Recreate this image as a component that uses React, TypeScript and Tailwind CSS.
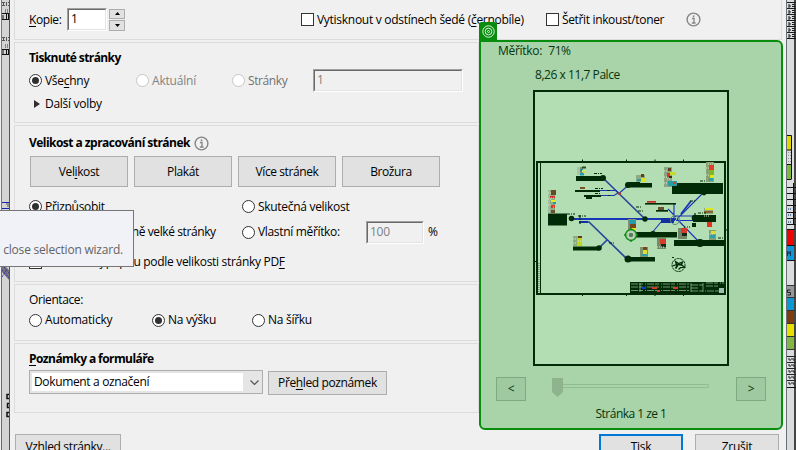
import React from "react";
import { clsx } from "clsx";

type TextProps = { children: React.ReactNode; className?: string };

function T({ children, className = "tracking-[-0.28px]" }: TextProps) {
  return <span className={clsx("block shrink-0 whitespace-pre leading-4", className)}>{children}</span>;
}

function U({ children }: { children: React.ReactNode }) {
  return <span className="underline decoration-1 underline-offset-2">{children}</span>;
}

function Radio({ on, disabled }: { on?: boolean; disabled?: boolean }) {
  return (
    <span className={clsx("mr-[3px] flex size-[13px] shrink-0 items-center justify-center rounded-full border bg-white", disabled ? "border-[#c6c6c6]" : "border-[#333]")}>
      {on && <span className="size-[7px] rounded-full bg-[#303030]" />}
    </span>
  );
}

function Check() {
  return <span className="mr-[3px] size-[13px] shrink-0 border border-[#333] bg-white" />;
}

function Info() {
  return (
    <svg className="size-[15px] shrink-0" viewBox="0 0 15 15">
      <circle cx="7.5" cy="7.5" r="6.4" fill="none" stroke="#858585" strokeWidth="1.4" />
      <path d="M6 6.5h2v4.5M5.8 11h3.8" fill="none" stroke="#858585" strokeWidth="1.3" />
      <rect x="6.8" y="3.4" width="1.5" height="1.7" fill="#858585" />
    </svg>
  );
}

function Field({ children, className }: TextProps) {
  return (
    <span className={clsx("flex shrink-0 border border-t-[#a0a0a0] border-l-[#a0a0a0] border-r-white border-b-white", className)}>
      <span className="flex w-full border border-t-[#696969] border-l-[#696969] border-r-[#e3e3e3] border-b-[#e3e3e3] pl-[2px] pt-[1px]">
        {children}
      </span>
    </span>
  );
}

function Button({ children, className }: TextProps) {
  return (
    <span className={clsx("flex shrink-0 items-center justify-center border border-[#adadad] bg-[#e1e1e1]", className)}>{children}</span>
  );
}

function Group({ children, className }: TextProps) {
  return <section className={clsx("ml-1 flex w-[465px] shrink-0 flex-col border border-[#dcdcdc] pl-[14px]", className)}>{children}</section>;
}

const DARK = "#012b06";

/* x, y, width, height, colour */
const blocks: [number, number, number, number, string][] = [
  [576, 176, 28, 5, DARK], [575, 190, 25, 2, DARK], [584, 195, 17, 2, DARK], [586, 197, 6, 2, DARK],
  [548, 213.5, 19, 12, DARK], [573, 246.5, 26, 4, DARK], [627, 183, 25, 4.5, DARK],
  [672, 183, 51, 11, DARK], [645, 203, 31, 1.6, DARK], [656, 210, 12, 1.7, DARK],
  [693, 215, 23, 7, DARK], [692, 223, 4, 4, DARK], [636, 232, 41, 5.5, DARK],
  [674, 240, 51, 6, DARK], [628, 257, 27, 4.5, DARK], [629, 182, 11, 5, DARK],
  [579, 221, 9, 2, "#1430a6"], [661, 218, 13, 5, "#1230a0"],
  [577, 167, 3, 8, "#a9c3a3"], [580, 167, 3, 8, "#7c8d72"], [582, 166.5, 4, 2, "#244f15"], [580, 169, 3, 2.3, "#248c9a"], [582, 170, 4, 2.5, "#dfe41a"], [580, 173, 4, 2.5, "#249eb4"],
  [548, 190, 3, 23, "#9dbf9b"], [550, 190, 5, 23, "#8fac88"], [551, 190, 5, 5, "#664b25"], [550, 196, 5, 2, "#d7302a"],
  [551, 200, 4, 2, "#e5ed24"], [553, 202, 3, 2, "#239bac"], [551, 205, 4, 3, "#df3426"], [551, 210, 4, 3, "#714f2b"],
  [580, 187, 5, 2, "#795322"], [573, 236, 9, 10, "#8fab86"], [577, 238, 5, 8, "#bad817"], [578, 236, 4, 2, "#5f3b16"],
  [636, 175, 9, 7, "#8fab86"], [641, 174, 3, 3, "#6d3b17"], [641, 178, 4, 4, "#d9e918"], [637, 179, 4, 2, "#2b9ba4"],
  [664, 167, 8, 20, "#8aa680"], [668, 168, 3, 3, "#63421b"], [667, 173, 3, 4, "#df3528"], [670, 172, 6, 3, "#c5dd21"],
  [669, 176, 3, 2, "#243b1a"], [668, 181, 9, 5, "#2b9ba4"], [673, 182, 3, 2, "#d64430"],
  [706, 162, 8, 20, "#88a278"], [709, 165, 5, 5, "#e63b28"], [709, 170, 5, 5, "#7eb924"], [710, 175, 4, 3, "#dfe719"], [709, 178, 4, 3, "#2ba2b2"],
  [647, 201, 9, 1.7, "#c92a21"], [658, 207, 6, 3, "#67512b"],
  [704, 208, 9, 6, "#8eaa7f"], [705, 208, 8, 2, "#dfe628"], [704, 211, 9, 2, "#89652c"],
  [705, 222, 8, 5, "#bdd6ae"], [707, 222, 5, 5, "#df3425"],
  [628, 219, 8, 14, "#7b8e72"], [630, 220, 6, 4, "#249caf"], [630, 224, 6, 4, "#78461c"], [631, 228, 5, 3, "#e3e526"],
  [678, 228, 9, 11, "#718766"], [681, 228, 6, 5, "#da3a2e"], [682, 233, 5, 3, "#142915"],
  [657, 238, 9, 11, "#738b69"], [660, 239, 6, 5, "#d83a2c"], [661, 244, 5, 3, "#142915"],
  [709, 230, 7, 10, "#80a073"], [711, 231, 5, 3, "#dce127"], [710, 235, 5, 3, "#2c9fab"],
  [640, 247, 8, 10, "#7c956c"], [643, 247, 4, 3, "#76461d"], [643, 250, 4, 4, "#dce229"], [642, 254, 5, 2, "#2c9fab"],
];

function Preview() {
  return (
    <svg className="block h-[272px] w-[192px]" viewBox="535 92 192 272">
      <path d="M536 162H726M537 161V295M725 161V295M536 294H726" stroke={DARK} strokeWidth="2" fill="none" />
      <path d="M540.500 163V293" stroke={DARK} strokeWidth="1" />
      <path d="M538.800 263V292" stroke="#71916f" strokeWidth="1.500" strokeDasharray="1 1" />
      <path d="M582.500 159.500v3M626.500 159.500v3M655 159.500v3M683.500 159.500v3M582.500 293v3M626.500 293v3M655 293v3M683.500 293v3M534 261.500h3M725 230h3" stroke={DARK} />
      <g stroke="#1836b5" fill="none">
        <path d="M571 218.900H676" strokeWidth="2" />
        <path d="M603 178L644 218M579 222H589L628 260M607 240l-9 9" strokeWidth="1.700" stroke="#28489b" />
        <path d="M600 190.500h16l3 3 9-8M601 195.500h13l5-3M674 203v16M668 209l8 8M677 219l26-26M661 222l-10 12M676 216h17M676 220.500h17M677 219l23 24" strokeWidth="1.100" />
        <path d="M691 201l-10 13M663 220h12" strokeWidth="1.800" />
      </g>
      {blocks.map(([x, y, w, h, c], i) => (
        <rect key={i} x={x} y={y} width={w} height={h} fill={c} />
      ))}
      <g fill={DARK}>
        <circle cx="603" cy="178" r="3" /><circle cx="571.500" cy="218.500" r="2.800" />
        <circle cx="628" cy="185" r="3" /><circle cx="599" cy="248" r="2.800" />
        <circle cx="628" cy="259" r="3.500" /><circle cx="645" cy="219" r="2.700" />
        <circle cx="653" cy="234" r="3" /><circle cx="700" cy="243" r="4" />
        <circle cx="695" cy="218" r="3.300" /><circle cx="704" cy="193" r="2.400" />
      </g>
      <circle cx="619.500" cy="193.500" r="1.600" fill="#a34140" />
      <path d="M580 215v9M578 216h8M594 173.500h8M607 190.500h3M608 195.500h2M595 188.500h8M595 193.500h6M597 210.500h0M609 243h6M636 207h5M695 213v14M698 213h8M700 181h5M718 238h5M567 214h8M683 227h7M690 201h5M638 211h5" stroke={DARK} strokeWidth="1.200" strokeDasharray="3 1 1 1" />
      <circle cx="675" cy="220" r="4.500" fill="none" stroke="#5d8873" />
      <path d="M582 171h3M551 198h4M553 207h3M578 241h4M641 173h3M667 179h4M708 164h5M704 216h5M679 227h8M657 247h8M708 234h6M640 246h7M573 239h4M573 243h4M548 193h3M548 199h3M548 205h3M664 171h3M664 177h3M664 183h3M706 168h3M706 175h3" stroke="#d6e7c5" strokeDasharray="1 1" />
      <g fill="none" stroke={DARK}>
        <circle cx="678.500" cy="265" r="6.500" strokeWidth=".9" strokeDasharray="3 .5" />
        <path d="M672.500 266l4-1.500-1-3 3 2 4-1.500-1 3 3 2-4 .5-2 2" strokeWidth="1.300" />
        <path d="M676 264.500h6M677.500 265.500l-2 3" strokeWidth="1.800" />
        <path d="M672 257.500h2" />
      </g>
      <rect x="630" y="282" width="95" height="11" fill={DARK} />
      <g fill="none" stroke="#b3ddb0" strokeWidth=".6">
        <path d="M631 284h58M631 287h58M631 290.500h58M691 285h12M691 288h8M691 291h30M706 283h18M706 286h14" strokeDasharray="7 1 4 2 1 1" />
        <path d="M640 283v9M691 283v9M703 283v9" />
      </g>
      <path d="M642 288h4" stroke="#1437c9" strokeWidth="2" />
      <path d="M652 288h5M673 288h5M657 291h3" stroke="#d63d2c" strokeWidth="2" />
      <rect x="719" y="288" width="5" height="5" fill="#9ebfab" />
      <circle cx="631" cy="235" r="5.500" fill="#9cbd97" stroke="#078b12" strokeWidth="1.300" />
      <path d="M631 228v2M631 240v2M624 235h2M636 235h2" stroke="#078b12" strokeWidth="1.300" />
      <circle cx="631" cy="235" r="3" fill="#55805a" stroke="#c4d9bd" strokeWidth="1.300" />
    </svg>
  );
}

function LeftEdge() {
  return (
    <svg className="h-[450px] w-[10px] shrink-0" viewBox="0 0 10 450">
      <path d="M0 0h10v450H0z" fill="#d4d4d4" />
      <path d="M0 0h1v450H0z" fill="#f0f0f0" />
      <path d="M1.5 0v268" stroke="#777" />
      <path d="M1.5 268v182" stroke="#2b78c5" />
      <g stroke="#555" strokeWidth="1" fill="none">
        <path d="M2 2.5h7M2 5.5h7M2 37.5h7M2 40.5h7" strokeDasharray="1 1" />
        <path d="M3.5 2v4M6.5 2v4M3.5 37v4M6.5 37v4" />
      </g>
      <path d="M5.5 9v4M7.5 9v4M5.5 44v4M7.5 44v4" stroke="#a77474" />
      <path d="M2 13.5h7M2 19.5h7M3 15v4M6.5 14v5M8.5 14v5M2 49.5h7M2 54.5h7M3 50v4M6.5 50v5M8.5 50v5" stroke="#111" />
      <path d="M2 202.5h7M2 208.5h7" stroke="#1724ac" />
      <path d="M6 204h3M7 206h2" stroke="#555" />
      <path d="M2 267h4l3 3v10l-7-8z" fill="#777" />
      <path d="M2 270l7 8M2 277l5-8M4 267l5 6" stroke="#3932ad" strokeDasharray="2 1" />
      <path d="M9 394.5H7v4h2M9 403.5H7.5v4H9M9 412.500H7v4h2" fill="none" stroke="#111" strokeWidth="1.500" />
      <path d="M9.500 0v450" stroke="#555" />
    </svg>
  );
}

function RightEdge() {
  return (
    <svg className="h-[450px] w-[10px] shrink-0" viewBox="786 0 10 450">
      <path d="M786 0h10v450h-10z" fill="#dcdcdc" />
      <path d="M786.500 0v450" stroke="#68707a" />
      <path d="M795 0v450" stroke="#464646" strokeWidth="2" />
      {[2, 8, 14, 20, 26, 32].map((y) => (
        <path key={y} d={`M787 ${y + 0.5}h9M788 ${y + 3}h2v2h-2M792 ${y + 2.5}h3M792 ${y + 4.5}h3v-1`} fill="none" stroke="#1c1c1c" />
      ))}
      <path d="M787 38.500h9" stroke="#111" />
      <path d="M787 135h4v15h-4z" fill="#e0d800" />
      <path d="M787 165h4v14h-4z" fill="#83b541" />
      <path d="M787 135.500h4.500v44M787 150h4M787 164.500h4M787 179.500h4" fill="none" stroke="#111" />
      <path d="M788.500 152v11M790.500 152v11" stroke="#999" strokeDasharray="1 2" />
      <path d="M787 187.500h9M787 193.500h9M787 199.500h9M787 205.500h9M787 212.500h9M787 218.500h9M787 224.500h9M793.500 183v42" stroke="#111" />
      <path d="M788 209h4M788 215h4M788 222h4" stroke="#6581a0" strokeWidth="2" strokeDasharray="1 1" />
      <path d="M787 230h7v15h-7z" fill="#ed0505" />
      <path d="M787 246h7v15h-7z" fill="#0b98d8" />
      <path d="M787 229.500h8M787 245.500h8M787 260.500h8" stroke="#111" />
      <path d="M787.500 256v-5l1.500 3 1.500-3v5" fill="none" stroke="#183857" />
      <path d="M787 286h7v11h-7z" fill="#999" />
      <path d="M787 298h7v12h-7z" fill="#0c98d5" />
      <path d="M787 311h7v12h-7z" fill="#7f3c0e" />
      <path d="M787 324h7v12h-7z" fill="#e6df00" />
      <path d="M787 337h7v12h-7z" fill="#83b642" />
      <path d="M787 285.500h8M787 297.500h8M787 310.500h8M787 323.500h8M787 336.500h8M787 349.500h8" stroke="#333" />
      <path d="M790.500 290h-3v2.500h3v2.500h-3" fill="none" stroke="#222" />
      {[357, 363, 369, 375, 381].map((y) => (
        <path key={y} d={`M787 ${y - 0.5}h9M788 ${y + 2}h2v2M791 ${y + 2}h3v2`} fill="none" stroke="#222" />
      ))}
      <path d="M787 387.500h9" stroke="#111" />
    </svg>
  );
}

export default function App() {
  return (
    <main className="relative flex h-[450px] w-[796px] overflow-hidden bg-[#f0f0f0] font-['Open_Sans','Noto_Sans',sans-serif] text-[12px] text-black">
      <LeftEdge />
      <div className="flex w-[776px] shrink-0 flex-col">
        <section className="ml-1 flex h-10 w-[768px] shrink-0 items-center border-x border-b border-[#dcdcdc] pl-[14px]">
          <div className="flex w-[38px]"><T className="tracking-[-0.4px]"><U>K</U>opie:</T></div>
          <Field className="h-[23px] w-10 bg-white"><T>1</T></Field>
          <div className="ml-[2px] flex h-[22px] w-4 flex-col gap-px">
            <Button className="h-[10.5px] w-4"><svg className="h-[3px] w-[5px]" viewBox="0 0 5 3"><path d="M0 3L2.500 0 5 3z" /></svg></Button>
            <Button className="h-[10.5px] w-4"><svg className="h-[3px] w-[5px]" viewBox="0 0 5 3"><path d="M0 0l2.500 3L5 0z" /></svg></Button>
          </div>
          <div className="ml-44 flex w-[245px] items-center"><Check /><T>Vytisknout v odstínech šedé (<U>č</U>ernobíle)</T></div>
          <div className="flex w-[140px] items-center"><Check /><T className="tracking-[-0.35px]">Šetřit inkoust/toner</T></div>
          <Info />
        </section>

        <Group className="mt-[2px] h-[81px] pt-[7px]">
          <T className="font-bold tracking-[-0.6px]">Tisknuté stránky</T>
          <div className="mt-[3px] flex h-[23px] items-center">
            <div className="flex w-[107px] items-center"><Radio on /><T>Vše<U>c</U>hny</T></div>
            <div className="flex w-24 items-center text-[#838383]"><Radio disabled /><T className="tracking-[-0.2px]">Aktuální</T></div>
            <div className="flex w-[81px] items-center text-[#707070]"><Radio disabled /><T className="tracking-[-0.4px]">Stránky</T></div>
            <Field className="h-[23px] w-[150px] text-[#808080]"><T>1</T></Field>
          </div>
          <div className="mt-1 flex items-center">
            <svg className="ml-[5px] mr-[5px] h-2 w-[6px]" viewBox="0 0 6 8"><path d="M0 0l6 4-6 4z" fill="#303030" /></svg>
            <T>Další volby</T>
          </div>
        </Group>

        <Group className="mt-[2px] h-[157px] pt-[9px]">
          <div className="flex h-4 items-center gap-1"><T className="font-bold tracking-[-0.54px]">Velikost a zpracování stránek</T><Info /></div>
          <div className="ml-px mt-[5px] flex gap-[6px]">
            <Button className="h-[31px] w-[98px]"><T className="tracking-[-0.4px]">Vel<U>i</U>kost</T></Button>
            <Button className="h-[31px] w-[98px]"><T className="tracking-[-0.4px]">Plakát</T></Button>
            <Button className="h-[31px] w-[98px]"><T className="tracking-[-0.4px]">Více stránek</T></Button>
            <Button className="h-[31px] w-[98px]"><T className="tracking-[-0.4px]">Brožura</T></Button>
          </div>
          <div className="mt-[11px] flex h-4 items-center">
            <div className="flex w-[213px] items-center"><Radio on /><T className="pt-px tracking-[-0.3px]">Přizpůsobit</T></div>
            <Radio /><T className="pt-px tracking-[-0.3px]">Skutečná velikost</T>
          </div>
          <div className="mt-[7px] flex h-[22px] items-center">
            <div className="flex w-[213px] items-center"><Radio /><T className="tracking-[-0.4px]">Zmenšit nadměrně velké stránky</T></div>
            <div className="flex w-[124px] items-center"><Radio /><T className="tracking-[-0.33px]">Vlastní měřítko:</T></div>
            <Field className="h-[23px] w-[58px] text-[#808080]"><T>100</T></Field>
            <span className="ml-1"><T>%</T></span>
          </div>
          <div className="mt-[11px] flex items-center"><Check /><T className="tracking-[-0.31px]">Zvolit zdroj papíru podle velikosti stránky PD<U>F</U></T></div>
        </Group>

        <Group className="mt-[2px] h-[57px] pt-[7px]">
          <T className="tracking-[-0.4px]">Orientace:</T>
          <div className="mt-1 flex items-center">
            <div className="flex w-[123px] items-center"><Radio /><T className="tracking-[-0.2px]">Automaticky</T></div>
            <div className="flex w-[100px] items-center"><Radio on /><T>Na výšku</T></div>
            <Radio /><T>Na šířku</T>
          </div>
        </Group>

        <Group className="mt-[2px] h-[70px] pt-[7px]">
          <T className="font-bold tracking-[-0.58px]"><U>P</U>oznámky a formuláře</T>
          <div className="mt-[3px] flex items-start">
            <div className="flex h-6 w-[234px] items-center border border-[#adadad] bg-[#e5e5e5] pl-[2px]">
              <div className="flex h-[18px] w-[211px] items-center bg-white pl-[2px]"><T className="tracking-[-0.35px]">Dokument a označení</T></div>
              <svg className="ml-[7px] h-[5px] w-[9px]" viewBox="0 0 9 5"><path d="M.5.5l4 4 4-4" fill="none" stroke="#555" strokeWidth="1.200" /></svg>
            </div>
            <Button className="ml-[5px] mt-px h-6 w-[119px]"><T className="tracking-[-0.38px]">Pře<U>h</U>led poznámek</T></Button>
          </div>
        </Group>
        <footer className="mt-[21px] flex shrink-0 pl-[5px]">
          <Button className="h-[25px] w-[106px]"><T className="tracking-[-0.36px]">Vzhled stránky...</T></Button>
          <span className="ml-[478px] flex h-[25px] w-[84px] items-center justify-center border-2 border-[#0078d7] bg-[#e1e1e1]"><T>Tisk</T></span>
          <Button className="ml-3 h-[25px] w-[84px]"><T>Zrušit</T></Button>
        </footer>
      </div>
      <RightEdge />

      <aside className="absolute left-[479px] top-10 flex h-[390px] w-[304px] flex-col rounded-md rounded-tl-none border-2 border-[#078c0e] bg-[#a9d3a9] text-[#06350c]">
        <div className="ml-[17px] mt-px flex gap-[6px]"><T>Měřítko:</T><T className="tracking-[-0.4px]">71%</T></div>
        <div className="ml-[54px] mt-2"><T className="tracking-[-0.45px]">8,26 x 11,7 Palce</T></div>
        <div className="ml-[52px] mt-[7px] h-[276px] w-[196px] shrink-0 border-2 border-[#012b06] bg-[#b3deb3]"><Preview /></div>
        <div className="ml-[15px] mt-[11px] flex h-6 w-[270px] shrink-0">
          <span className="flex w-[30px] items-center justify-center border border-[#7eaa7e] bg-[#9fc9a0]"><T>&lt;</T></span>
          <svg className="ml-[26px] mt-px h-5 w-[158px]" viewBox="0 0 158 20"><path d="M5.500 6.500h151v3h-151z" fill="none" stroke="#92bd92" /><path d="M0 0h11v14l-5.500 5L0 14z" fill="#8db48c" /></svg>
          <span className="ml-[26px] flex w-[30px] items-center justify-center border border-[#7eaa7e] bg-[#9fc9a0]"><T>&gt;</T></span>
        </div>
        <div className="mt-[5px] flex justify-center"><T className="tracking-[-0.52px]">Stránka 1 ze 1</T></div>
      </aside>
      <div className="absolute left-[479px] top-[22px] flex h-5 w-[18px] justify-center rounded-t-[3px] bg-[#078c0e] pt-[3px]">
        <svg className="size-[13px]" viewBox="0 0 13 13" fill="none" stroke="#e3f2e3"><circle cx="6.500" cy="6.500" r="5.700" /><circle cx="6.500" cy="6.500" r="3.300" /><circle cx="6.500" cy="6.500" r="1" /></svg>
      </div>
      <div className="absolute left-0 top-[210px] flex h-[57px] w-[134px] items-start justify-end overflow-hidden border border-l-0 border-[#767676] bg-[#f1f2f7] pr-[10px] pt-[31px] text-[#646464]">
        <T className="tracking-[-0.21px]">d close selection wizard.</T>
      </div>
    </main>
  );
}
